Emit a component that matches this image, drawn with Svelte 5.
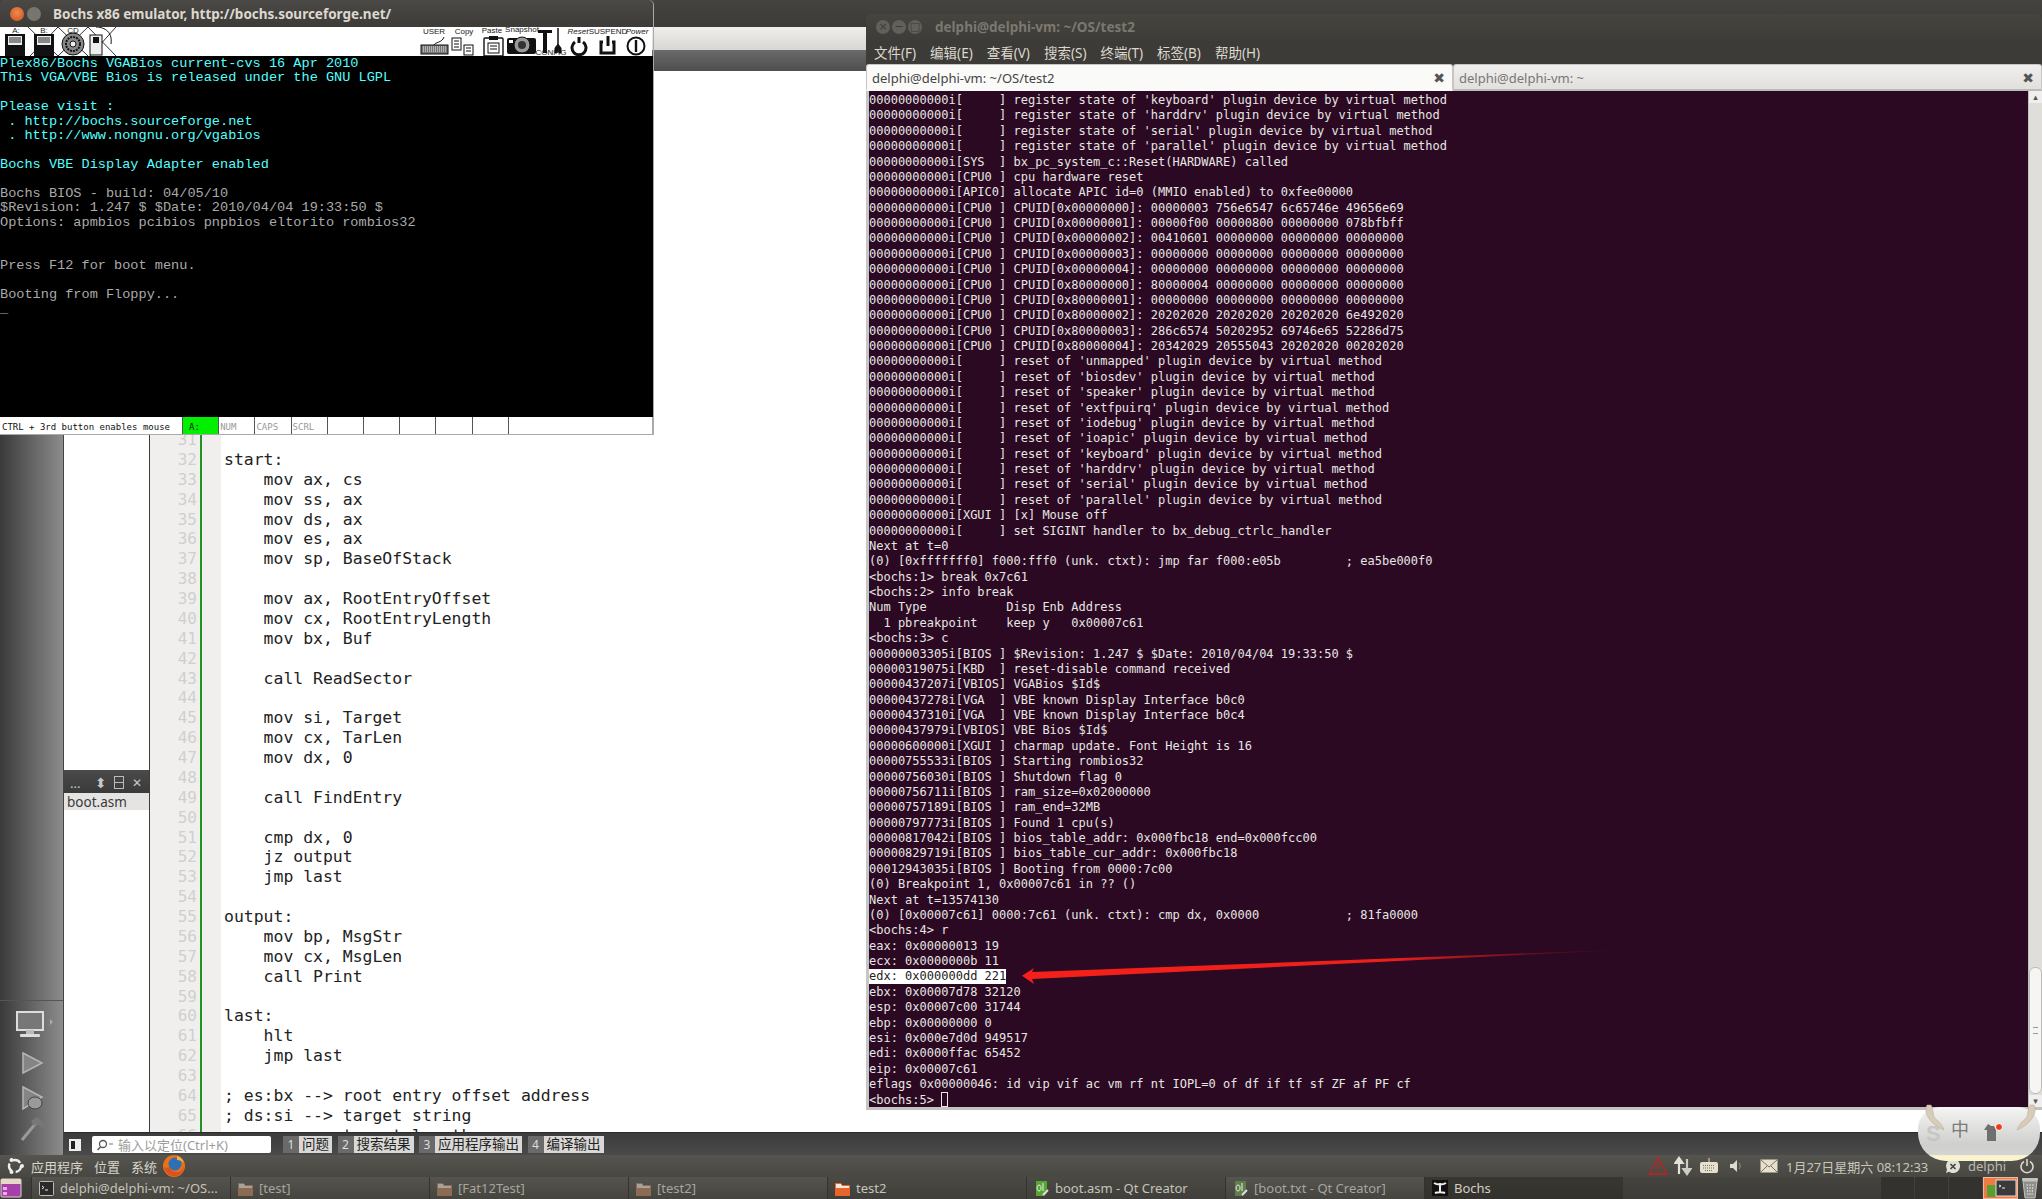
<script lang="ts">
  const bochsRows = [
    ['Plex86/Bochs VGABios current-cvs 16 Apr 2010', 'c'],
    ['This VGA/VBE Bios is released under the GNU LGPL', 'c'],
    ['', 'c'],
    ['Please visit :', 'c'],
    [' . http://bochs.sourceforge.net', 'c'],
    [' . http://www.nongnu.org/vgabios', 'c'],
    ['', 'c'],
    ['Bochs VBE Display Adapter enabled', 'c'],
    ['', 'g'],
    ['Bochs BIOS - build: 04/05/10', 'g'],
    ['$Revision: 1.247 $ $Date: 2010/04/04 19:33:50 $', 'g'],
    ['Options: apmbios pcibios pnpbios eltorito rombios32', 'g'],
    ['', 'g'],
    ['', 'g'],
    ['Press F12 for boot menu.', 'g'],
    ['', 'g'],
    ['Booting from Floppy...', 'g'],
    ['_', 'g']
  ];

  const code = [
    '', 'start:', '    mov ax, cs', '    mov ss, ax', '    mov ds, ax', '    mov es, ax',
    '    mov sp, BaseOfStack', '', '    mov ax, RootEntryOffset', '    mov cx, RootEntryLength',
    '    mov bx, Buf', '', '    call ReadSector', '', '    mov si, Target', '    mov cx, TarLen',
    '    mov dx, 0', '', '    call FindEntry', '', '    cmp dx, 0', '    jz output', '    jmp last', '',
    'output:', '    mov bp, MsgStr', '    mov cx, MsgLen', '    call Print', '', 'last:', '    hlt',
    '    jmp last', '', '; es:bx --> root entry offset address', '; ds:si --> target string',
    '; cx    --> target length'
  ];

  const term = [
    "00000000000i[     ] register state of 'keyboard' plugin device by virtual method",
    "00000000000i[     ] register state of 'harddrv' plugin device by virtual method",
    "00000000000i[     ] register state of 'serial' plugin device by virtual method",
    "00000000000i[     ] register state of 'parallel' plugin device by virtual method",
    '00000000000i[SYS  ] bx_pc_system_c::Reset(HARDWARE) called',
    '00000000000i[CPU0 ] cpu hardware reset',
    '00000000000i[APIC0] allocate APIC id=0 (MMIO enabled) to 0xfee00000',
    '00000000000i[CPU0 ] CPUID[0x00000000]: 00000003 756e6547 6c65746e 49656e69',
    '00000000000i[CPU0 ] CPUID[0x00000001]: 00000f00 00000800 00000000 078bfbff',
    '00000000000i[CPU0 ] CPUID[0x00000002]: 00410601 00000000 00000000 00000000',
    '00000000000i[CPU0 ] CPUID[0x00000003]: 00000000 00000000 00000000 00000000',
    '00000000000i[CPU0 ] CPUID[0x00000004]: 00000000 00000000 00000000 00000000',
    '00000000000i[CPU0 ] CPUID[0x80000000]: 80000004 00000000 00000000 00000000',
    '00000000000i[CPU0 ] CPUID[0x80000001]: 00000000 00000000 00000000 00000000',
    '00000000000i[CPU0 ] CPUID[0x80000002]: 20202020 20202020 20202020 6e492020',
    '00000000000i[CPU0 ] CPUID[0x80000003]: 286c6574 50202952 69746e65 52286d75',
    '00000000000i[CPU0 ] CPUID[0x80000004]: 20342029 20555043 20202020 00202020',
    "00000000000i[     ] reset of 'unmapped' plugin device by virtual method",
    "00000000000i[     ] reset of 'biosdev' plugin device by virtual method",
    "00000000000i[     ] reset of 'speaker' plugin device by virtual method",
    "00000000000i[     ] reset of 'extfpuirq' plugin device by virtual method",
    "00000000000i[     ] reset of 'iodebug' plugin device by virtual method",
    "00000000000i[     ] reset of 'ioapic' plugin device by virtual method",
    "00000000000i[     ] reset of 'keyboard' plugin device by virtual method",
    "00000000000i[     ] reset of 'harddrv' plugin device by virtual method",
    "00000000000i[     ] reset of 'serial' plugin device by virtual method",
    "00000000000i[     ] reset of 'parallel' plugin device by virtual method",
    '00000000000i[XGUI ] [x] Mouse off',
    '00000000000i[     ] set SIGINT handler to bx_debug_ctrlc_handler',
    'Next at t=0',
    '(0) [0xfffffff0] f000:fff0 (unk. ctxt): jmp far f000:e05b         ; ea5be000f0',
    '<bochs:1> break 0x7c61',
    '<bochs:2> info break',
    'Num Type           Disp Enb Address',
    '  1 pbreakpoint    keep y   0x00007c61',
    '<bochs:3> c',
    '00000003305i[BIOS ] $Revision: 1.247 $ $Date: 2010/04/04 19:33:50 $',
    '00000319075i[KBD  ] reset-disable command received',
    '00000437207i[VBIOS] VGABios $Id$',
    '00000437278i[VGA  ] VBE known Display Interface b0c0',
    '00000437310i[VGA  ] VBE known Display Interface b0c4',
    '00000437979i[VBIOS] VBE Bios $Id$',
    '00000600000i[XGUI ] charmap update. Font Height is 16',
    '00000755533i[BIOS ] Starting rombios32',
    '00000756030i[BIOS ] Shutdown flag 0',
    '00000756711i[BIOS ] ram_size=0x02000000',
    '00000757189i[BIOS ] ram_end=32MB',
    '00000797773i[BIOS ] Found 1 cpu(s)',
    '00000817042i[BIOS ] bios_table_addr: 0x000fbc18 end=0x000fcc00',
    '00000829719i[BIOS ] bios_table_cur_addr: 0x000fbc18',
    '00012943035i[BIOS ] Booting from 0000:7c00',
    '(0) Breakpoint 1, 0x00007c61 in ?? ()',
    'Next at t=13574130',
    '(0) [0x00007c61] 0000:7c61 (unk. ctxt): cmp dx, 0x0000            ; 81fa0000',
    '<bochs:4> r',
    'eax: 0x00000013 19',
    'ecx: 0x0000000b 11',
    'edx: 0x000000dd 221',
    'ebx: 0x00007d78 32120',
    'esp: 0x00007c00 31744',
    'ebp: 0x00000000 0',
    'esi: 0x000e7d0d 949517',
    'edi: 0x0000ffac 65452',
    'eip: 0x00007c61',
    'eflags 0x00000046: id vip vif ac vm rf nt IOPL=0 of df if tf sf ZF af PF cf',
    '<bochs:5> '
  ];

  const menus = ['文件(F)', '编辑(E)', '查看(V)', '搜索(S)', '终端(T)', '标签(B)', '帮助(H)'];
  const outTabs = [['1', '问题'], ['2', '搜索结果'], ['3', '应用程序输出'], ['4', '编译输出']];
  const statusCells = ['A:', 'NUM', 'CAPS', 'SCRL', '', '', '', '', '', ''];

  const tasks = [
    { t: 'delphi@delphi-vm: ~/OS...', k: 'term' },
    { t: '[test]', k: 'dim' },
    { t: '[Fat12Test]', k: 'dim' },
    { t: '[test2]', k: 'dim' },
    { t: 'test2', k: 'folder' },
    { t: 'boot.asm - Qt Creator', k: 'qt' },
    { t: '[boot.txt - Qt Creator]', k: 'qtdim' },
    { t: 'Bochs', k: 'bochs' }
  ];
</script>

<div class="desktop">
  <!-- Qt Creator, underneath everything -->
  <div class="qt">
    <div class="qt-title"></div>
    <div class="qt-menu"></div>
    <div class="qt-tool"></div>
    <div class="qt-body">
      <div class="side">
        <div class="side-fill"></div>
        <div class="side-icons">
          <svg width="46" height="32" viewBox="0 0 46 32">
            <rect x="7" y="3" width="26" height="18" fill="#777" stroke="#ddd" stroke-width="2"/>
            <rect x="16" y="21" width="8" height="4" fill="#bbb"/>
            <rect x="10" y="25" width="20" height="3" rx="1" fill="#ddd"/>
            <path d="M40 10l3 3-3 3z" fill="#aaa"/>
          </svg>
          <svg width="46" height="26" viewBox="0 0 46 26">
            <path d="M13 3l19 10-19 10z" fill="#858585" stroke="#b5b5b5" stroke-width="1.5"/>
          </svg>
          <svg width="46" height="28" viewBox="0 0 46 28">
            <path d="M13 2l19 10-19 12z" fill="#858585" stroke="#b5b5b5" stroke-width="1.5"/>
            <ellipse cx="25" cy="18" rx="7" ry="6" fill="#9a9a9a" stroke="#444"/>
          </svg>
          <svg class="hammer" width="46" height="26" viewBox="0 0 46 26">
            <path d="M12 24L26 7" stroke="#999" stroke-width="3"/>
            <path d="M21 5l6-4 8 7-3 3-6-3-2 2z" fill="#777"/>
          </svg>
        </div>
      </div>
      <div class="qt-work">
        <div class="qt-main">
          <div class="proj">
            <div class="proj-top"></div>
            <div class="proj-head">
              <span class="dots">...</span>
              <span class="sort">⬍</span>
              <span class="split"></span>
              <span class="x">✕</span>
            </div>
            <div class="proj-file">boot.asm</div>
          </div>
          <div class="editor">
            {#each code as line, i}
              <div class="cl">
                <span class="num">{i + 31}</span>
                <span class="bar"></span>
                <span class="fold"></span>
                <span class="src">{line}</span>
              </div>
            {/each}
          </div>
        </div>
        <div class="qt-bottom">
          <svg class="toggle" width="16" height="14" viewBox="0 0 16 14">
            <rect x="1" y="1" width="12" height="12" fill="#eee"/>
            <rect x="3" y="3" width="4" height="8" fill="#222"/>
          </svg>
          <div class="locate">
            <svg width="18" height="12" viewBox="0 0 18 12">
              <circle cx="7" cy="5" r="3.5" fill="none" stroke="#555" stroke-width="1.3"/>
              <path d="M4.5 8L1.5 11" stroke="#555" stroke-width="1.5"/>
              <path d="M13 5h4" stroke="#777"/>
            </svg>
            <span>输入以定位(Ctrl+K)</span>
          </div>
          {#each outTabs as [n, label]}
            <div class="otab"><span class="n">{n}</span><span class="l">{label}</span></div>
          {/each}
        </div>
      </div>
    </div>
  </div>

  <!-- panels -->
  <div class="panel-top">
    <svg class="ulogo" width="20" height="20" viewBox="0 0 20 20">
      <circle cx="10" cy="10" r="6" fill="none" stroke="#eee" stroke-width="2.4" stroke-dasharray="8.5 4"/>
      <circle cx="17" cy="10" r="2" fill="#eee"/>
      <circle cx="6.5" cy="4" r="2" fill="#eee"/>
      <circle cx="6.5" cy="16" r="2" fill="#eee"/>
    </svg>
    <span class="pm">应用程序</span>
    <span class="pm">位置</span>
    <span class="pm">系统</span>
    <svg class="fox" width="24" height="24" viewBox="0 0 24 24">
      <circle cx="12" cy="12" r="11" fill="#e8711a"/>
      <circle cx="13" cy="10" r="6.5" fill="#2f6fb3"/>
      <path d="M2 13c1 6 6 10 12 9 5-1 8-5 8-10-1 4-4 7-8 6-4 0-6-3-6-5-3 1-5 1-6 0z" fill="#d9531e"/>
      <path d="M15 2c4 1 6 4 7 7-2-2-4-3-7-3z" fill="#f6b23a"/>
    </svg>
    <div class="tray">
      <svg width="22" height="20" viewBox="0 0 22 20"><path d="M11 2l9 16H2z" fill="none" stroke="#c4201e" stroke-width="1.3"/><path d="M11 7v6M11 14.5v1.5" stroke="#c4201e" stroke-width="1.3"/></svg>
      <svg class="t-net" width="18" height="20" viewBox="0 0 18 20"><path d="M5 18V5M1.5 7L5 2l3.5 5z" stroke="#e4e1d8" stroke-width="2.2" fill="#e4e1d8"/><path d="M13 3v13M9.5 13l3.5 5 3.5-5z" stroke="#cfcbc0" stroke-width="2.2" fill="#cfcbc0"/></svg>
      <svg class="t-key" width="20" height="16" viewBox="0 0 20 16"><rect x="1" y="4" width="18" height="11" rx="2" fill="#e6e0cc"/><path d="M10 4V0" stroke="#e6e0cc"/><path d="M4 7.5h12M4 10h12M6 12.5h8" stroke="#77756b" stroke-dasharray="1 1"/></svg>
      <svg class="t-vol" width="14" height="14" viewBox="0 0 14 14"><path d="M1 5h3l4-4v12l-4-4H1z" fill="#dedbd0"/><path d="M10 4c1.5 2 1.5 4 0 6" stroke="#99978e" fill="none"/></svg>
      <svg class="t-mail" width="18" height="14" viewBox="0 0 18 14"><rect x="0.5" y="0.5" width="17" height="13" fill="#e6e0cc"/><path d="M1 1l8 7 8-7M1 13l6-6M17 13l-6-6" stroke="#77756b" fill="none"/></svg>
      <span class="clock">1月27日星期六 08:12:33</span>
      <svg class="t-user" width="18" height="18" viewBox="0 0 18 18"><path d="M9 2a7 7 0 1 1-4 12.7L2 16l1-3.5A7 7 0 0 1 9 2z" fill="#e2dfd4"/><path d="M6.5 7l5 5M11.5 7l-5 5" stroke="#444" stroke-width="1.6"/></svg>
      <span class="who">delphi</span>
      <svg class="t-pow" width="16" height="16" viewBox="0 0 16 16"><path d="M5 3.5a6 6 0 1 0 6 0" fill="none" stroke="#dcd9cf" stroke-width="1.6"/><path d="M8 1v7" stroke="#dcd9cf" stroke-width="1.6"/></svg>
    </div>
  </div>
  <div class="panel-tasks">
    <svg class="showdesk" width="22" height="20" viewBox="0 0 22 20">
      <rect x="1" y="1" width="20" height="18" rx="1" fill="#a63fa8" stroke="#d8d4c8"/>
      <rect x="1" y="1" width="20" height="5" fill="#e6d8c8"/>
      <rect x="3" y="9" width="4" height="3" fill="#f2a8ee"/>
      <rect x="3" y="14" width="4" height="3" fill="#f2a8ee"/>
    </svg>
    <div class="tasks">
      {#each tasks as task}
        <div class="task k-{task.k}">
          {#if task.k === 'term'}
            <svg width="15" height="15" viewBox="0 0 15 15"><rect x="0.5" y="0.5" width="14" height="14" rx="1" fill="#2a2a2a" stroke="#bbb"/><path d="M3 5l2 1.5L3 8M6 9h3" stroke="#eee" fill="none"/></svg>
          {:else if task.k === 'dim' || task.k === 'folder'}
            <svg width="15" height="15" viewBox="0 0 15 15">
              <path d="M0 2h6l1 2h8v11H0z" fill={task.k === 'dim' ? '#8d6a54' : '#e7642a'}/>
              <path d="M1 3h5l1 2h7v2H1z" fill={task.k === 'dim' ? '#a8a29a' : '#f2e8e0'}/>
            </svg>
          {:else if task.k === 'qt' || task.k === 'qtdim'}
            <svg width="15" height="17" viewBox="0 0 15 17">
              <path d="M2 1h11v12l-3 3H2z" fill={task.k === 'qt' ? '#55a632' : '#5d7f4a'}/>
              <path d="M5 5a2 3 0 1 0 .1 0M9 3v8" stroke="#eee" fill="none"/>
              <path d="M9 15l5-5" stroke="#ddd" stroke-width="2"/>
            </svg>
          {:else}
            <svg width="16" height="16" viewBox="0 0 16 16">
              <rect width="16" height="16" fill="#111"/>
              <path d="M2 3c3 2 9 2 12 0M8 3v10M3 13c2-1 8-1 10 0" stroke="#eee" stroke-width="2" fill="none"/>
            </svg>
          {/if}
          <span>{task.t}</span>
        </div>
      {/each}
    </div>
    <div class="pager">
      <span class="ws"></span><span class="ws"></span><span class="ws"></span>
      <span class="ws on"><i class="wsg"></i><svg width="22" height="18" viewBox="0 0 22 18"><rect x="1" y="1" width="20" height="16" fill="#3a3a3a" stroke="#ddd"/><path d="M4 6l2 1-2 1M7 9h3" stroke="#eee" fill="none"/></svg></span>
    </div>
    <svg class="trash" width="20" height="22" viewBox="0 0 20 22">
      <path d="M3 4h14l-2 17H5z" fill="#8f8f8a" stroke="#c4c4bf"/>
      <rect x="2" y="1" width="16" height="3" rx="1" fill="#c4c4bf"/>
      <path d="M7 7l1 12M10 7v12M13 7l-1 12" stroke="#d8d8d4" stroke-dasharray="2 1"/>
    </svg>
  </div>

  <!-- Bochs window -->
  <div class="bochs">
    <div class="b-title">
      <span class="btn close"></span>
      <span class="btn mini"></span>
      <span class="b-name">Bochs x86 emulator, http://bochs.sourceforge.net/</span>
    </div>
    <svg class="b-tools" width="652" height="29" viewBox="0 0 652 29">
      <g class="lbl">
        <text x="16" y="6">A:</text>
        <text x="44" y="6">B:</text>
        <text x="73" y="6">CD</text>
        <text x="434" y="7" font-size="9">USER</text>
        <text x="464" y="7" font-size="9">Copy</text>
        <text x="492" y="6" font-size="8">Paste</text>
        <text x="522" y="5" font-size="7.5">Snapshot</text>
        <text x="551" y="28" font-size="6">CONFIG</text>
        <text x="578" y="7" font-size="8" font-style="italic">Reset</text>
        <text x="608" y="7" font-size="6.5">SUSPEND</text>
        <text x="637" y="7" font-size="8" font-style="italic">Power</text>
      </g>
      <g stroke="#000" stroke-width="0.8">
        <path d="M28 0l30 29M58 0L30 29M58 0l30 29M88 0L58 29M88 0l28 29M116 0L90 29" fill="none"/>
      </g>
      <rect x="5" y="7" width="20" height="22" fill="#111"/>
      <rect x="8" y="9" width="14" height="9" fill="#eee"/>
      <path d="M9 11h12M9 13h12M9 15h12" stroke="#222"/>
      <rect x="34" y="7" width="20" height="22" fill="#111"/>
      <rect x="37" y="9" width="14" height="9" fill="#eee"/>
      <path d="M38 11h12M38 13h12M38 15h12" stroke="#222"/>
      <circle cx="73" cy="17" r="11" fill="#888" stroke="#111"/>
      <circle cx="73" cy="17" r="7" fill="none" stroke="#111" stroke-dasharray="2 1" stroke-width="2"/>
      <circle cx="73" cy="17" r="3" fill="#eee" stroke="#111"/>
      <rect x="90" y="8" width="12" height="20" fill="#eee" stroke="#111"/>
      <rect x="93" y="10" width="6" height="6" fill="#111"/>
      <path d="M96 0c6 0 17 3 15 17" fill="none" stroke="#111"/>
      <rect x="421" y="18" width="27" height="9" fill="#777" stroke="#111"/>
      <path d="M423 20h23M423 22h23M423 24h23" stroke="#eee" stroke-dasharray="1 1"/>
      <path d="M434 18c1-3 8-2 10-8" fill="none" stroke="#111"/>
      <rect x="452" y="11" width="9" height="12" fill="#fff" stroke="#111"/>
      <path d="M454 14h5M454 17h5M454 20h5" stroke="#111"/>
      <rect x="464" y="18" width="9" height="10" fill="#fff" stroke="#111"/>
      <path d="M466 21h5M466 24h5" stroke="#111"/>
      <rect x="484" y="11" width="19" height="18" rx="1" fill="#fff" stroke="#111" stroke-width="1.4"/>
      <rect x="489" y="9" width="9" height="4" fill="#111"/>
      <rect x="488" y="16" width="11" height="10" fill="#fff" stroke="#111"/>
      <path d="M490 19h7M490 22h7" stroke="#111"/>
      <rect x="507" y="11" width="29" height="16" rx="2" fill="#111"/>
      <circle cx="522" cy="18" r="8" fill="#999" stroke="#111"/>
      <circle cx="522" cy="18" r="4" fill="#333"/>
      <rect x="509" y="13" width="4" height="3" fill="#fff"/>
      <path d="M538 3h14v3h-5v20h-4V6h-5z" fill="#111"/>
      <path d="M558 1v16l-3 4v5h2l1-4 1 4h2v-5l-3-4z" fill="#111" stroke="#111"/>
      <path d="M575 15a7 7 0 1 0 8 0M579 10v6" fill="none" stroke="#111" stroke-width="3"/>
      <path d="M603 15h-2v11h13V15h-2M608 9v10" fill="none" stroke="#111" stroke-width="3"/>
      <circle cx="636" cy="19" r="8.5" fill="#fff" stroke="#111" stroke-width="2"/>
      <path d="M636 13v12" stroke="#111" stroke-width="2.4"/>
    </svg>
    <div class="b-screen">
      {#each bochsRows as [text, tone]}
        <div class="b-row {tone}">{text}</div>
      {/each}
    </div>
    <div class="b-status">
      <div class="b-hint">CTRL + 3rd button enables mouse</div>
      {#each statusCells as cell, i}
        <div class="b-cell" class:on={i === 0}>{cell}</div>
      {/each}
    </div>
  </div>

  <!-- terminal window -->
  <div class="term">
    <div class="t-title">
      <span class="wb">×</span><span class="wb">−</span><span class="wb sq">□</span>
      <span class="t-name">delphi@delphi-vm: ~/OS/test2</span>
    </div>
    <div class="t-menu">
      {#each menus as m}<span>{m}</span>{/each}
    </div>
    <div class="t-tabs">
      <div class="t-tab active"><span>delphi@delphi-vm: ~/OS/test2</span><b>✖</b></div>
      <div class="t-tab"><span>delphi@delphi-vm: ~</span><b>✖</b></div>
    </div>
    <div class="t-body">
      <div class="t-text">
        {#each term as line, i}
          <div class="t-line">
            {#if i === 57}
              <span class="sel">{line}</span>
            {:else}
              {line}{#if i === 65}<span class="cursor"></span>{/if}
            {/if}
          </div>
        {/each}
      </div>
      <div class="scroll">
        <span class="arrow">▴</span>
        <div class="track"><div class="thumb"><i></i></div></div>
        <span class="arrow">▾</span>
      </div>
    </div>
  </div>

  <svg class="annot" width="640" height="50" viewBox="0 0 640 50">
    <defs>
      <linearGradient id="fade" x1="0" x2="1" y1="0" y2="0">
        <stop offset="0" stop-color="#f5201a"/>
        <stop offset="0.6" stop-color="#ee1f1a"/>
        <stop offset="1" stop-color="#8a1520" stop-opacity="0"/>
      </linearGradient>
    </defs>
    <path d="M2 35.7L14 28l-2 4L620 9 12 39l2 5z" fill="url(#fade)"/>
  </svg>

  <!-- Sogou IME status pad -->
  <div class="sogou">
    <svg class="ear" width="134" height="36" viewBox="0 0 134 36">
      <path d="M13 2c-4 8 3 19 17 25-3-8-7-9-10-13-1-4-1-9-3-12z" fill="#d8cbb8" stroke="#b5a690" stroke-width="0.5"/>
      <path d="M120 2c4 8-3 19-17 25 3-8 7-9 10-13 1-4 1-9 3-12z" fill="#d8cbb8" stroke="#b5a690" stroke-width="0.5"/>
    </svg>
    <span class="s-logo">S</span>
    <span class="s-zh">中</span>
    <svg class="s-shirt" width="22" height="22" viewBox="0 0 22 22">
      <path d="M1 9l4-6 3 2h3l2 4v11H4V9z" fill="#6f6f6f"/>
      <circle cx="16" cy="6" r="3.5" fill="#f03a1c" stroke="#fff"/>
    </svg>
  </div>
</div>

<style>
  :global(body) {
    margin: 0;
    background: #3c3b37;
  }
  .desktop {
    position: relative;
    display: flex;
    flex-direction: column;
    width: 2042px;
    height: 1199px;
    overflow: hidden;
    font-family: 'Noto Sans', 'Noto Sans CJK SC', sans-serif;
  }

  /* Qt Creator */
  .qt {
    display: flex;
    flex-direction: column;
    height: 1155px;
    flex: none;
  }
  .qt-title {
    height: 27px;
    background: linear-gradient(#444340, #3c3b37);
  }
  .qt-menu {
    height: 23px;
    background: linear-gradient(#f0efed, #d8d6d2);
  }
  .qt-tool {
    height: 21px;
    background: linear-gradient(#6a6a6a, #4e4e4e);
  }
  .qt-body {
    flex: 1;
    min-height: 0;
    display: flex;
  }
  .side {
    width: 63px;
    flex: none;
    display: flex;
    flex-direction: column;
    background: linear-gradient(90deg, #3a3a3a, #8c8c8c);
    border-right: 1px solid #444;
  }
  .side-fill {
    height: 929px;
    flex: none;
    border-bottom: 1px solid #555;
  }
  .side-icons {
    display: flex;
    flex-direction: column;
    align-items: center;
    gap: 9px;
    padding-top: 8px;
    margin-left: 3px;
  }
  .hammer {
    margin-top: -6px;
  }
  .qt-work {
    flex: 1;
    min-width: 0;
    display: flex;
    flex-direction: column;
  }
  .qt-main {
    flex: 1;
    min-height: 0;
    display: flex;
  }
  .proj {
    width: 85px;
    flex: none;
    display: flex;
    flex-direction: column;
    background: #fff;
    border-right: 1px solid #3d3d3d;
  }
  .proj-top {
    height: 699px;
  }
  .proj-head {
    height: 23px;
    display: flex;
    align-items: center;
    background: linear-gradient(#4a4a4a, #3a3a3a);
    color: #c8c8c8;
    font-size: 13px;
    padding: 2px 0 0 6px;
    box-sizing: border-box;
  }
  .dots {
    width: 25px;
    line-height: 14px;
  }
  .sort {
    width: 17px;
    font-size: 14px;
    font-family: 'DejaVu Sans', sans-serif;
  }
  .split {
    width: 8px;
    height: 11px;
    border: 1px solid #bbb;
    background: linear-gradient(transparent 45%, #bbb 45%, #bbb 55%, transparent 55%);
    margin-right: 8px;
    margin-left: 2px;
  }
  .x {
    font-size: 12px;
    font-family: 'DejaVu Sans', sans-serif;
  }
  .proj-file {
    height: 17px;
    line-height: 18px;
    padding-left: 3px;
    background: #e6e4e2;
    color: #3a3a3a;
    font-size: 13.5px;
  }
  .editor {
    flex: 1;
    min-width: 0;
    padding-top: 359px;
    overflow: hidden;
    background: #fff;
    font-family: 'DejaVu Sans Mono', monospace;
    font-size: 16.45px;
    color: #222;
  }
  .cl {
    display: flex;
    height: 19.88px;
    line-height: 19.88px;
  }
  .num {
    width: 47px;
    padding-right: 3px;
    background: #f0efee;
    color: #cfcfcf;
    text-align: right;
    font-size: 16px;
  }
  .bar {
    width: 2px;
    background: #1f951f;
  }
  .fold {
    width: 19px;
    background: #f0efed;
  }
  .src {
    padding-left: 3px;
    white-space: pre;
  }
  .qt-bottom {
    height: 23px;
    flex: none;
    display: flex;
    align-items: center;
    background: linear-gradient(#3c3c3c, #4a4a4a);
    border-top: 1px solid #2c2c2c;
    box-sizing: border-box;
    padding: 1px 0 0 4px;
  }
  .toggle {
    width: 16px;
    margin-right: 8px;
  }
  .locate {
    width: 175px;
    height: 17px;
    display: flex;
    align-items: center;
    gap: 4px;
    padding-left: 4px;
    margin-right: 12px;
    background: #fff;
    border-radius: 2px;
    color: #9c9c9c;
    font-size: 13px;
  }
  .otab {
    height: 17px;
    display: flex;
    margin-right: 5.5px;
    font-size: 13.5px;
    line-height: 17px;
  }
  .n {
    width: 16px;
    text-align: center;
    background: #6a6a6a;
    color: #ddd;
    font-size: 12px;
  }
  .l {
    padding: 0 3px;
    background: #d9d8d6;
    color: #222;
  }

  /* panels */
  .panel-top {
    height: 22px;
    flex: none;
    display: flex;
    align-items: center;
    background: linear-gradient(#55544e, #484742);
    color: #d8d5cc;
    font-size: 13px;
  }
  .ulogo {
    margin: 0 6px 0 5px;
  }
  .pm {
    margin-right: 11px;
  }
  .fox {
    margin-left: -6px;
  }
  .tray {
    margin-left: auto;
    display: flex;
    align-items: center;
  }
  .t-net {
    margin-left: 5px;
  }
  .t-key {
    margin-left: 7px;
  }
  .t-vol {
    margin-left: 10px;
  }
  .t-mail {
    margin-left: 17px;
  }
  .clock {
    margin-left: 8px;
    width: 145px;
    white-space: nowrap;
    color: #c8c6bd;
  }
  .t-user {
    margin-left: 13px;
  }
  .who {
    margin-left: 6px;
    width: 42px;
    color: #bdbab0;
  }
  .t-pow {
    margin: 0 7px 0 9px;
  }
  .panel-tasks {
    height: 22px;
    flex: none;
    display: flex;
    align-items: center;
    background: linear-gradient(#45443f, #3c3b37);
    color: #c6c3ba;
    font-size: 13px;
  }
  .showdesk {
    flex: none;
    margin-right: 9px;
  }
  .tasks {
    display: flex;
    height: 100%;
  }
  .task {
    width: 199px;
    box-sizing: border-box;
    display: flex;
    align-items: center;
    gap: 6px;
    padding-left: 7px;
    border-left: 1px solid #33322e;
    background: linear-gradient(#55544f, #45443f);
    white-space: nowrap;
  }
  .k-dim,
  .k-qtdim {
    color: #a8a59d;
  }
  .k-folder,
  .k-qt {
    background: linear-gradient(#4a4944, #3f3e3a);
  }
  .k-bochs {
    background: linear-gradient(#38372f, #32312d);
    color: #d2cfc6;
  }
  .pager {
    margin-left: auto;
    display: flex;
    height: 100%;
    align-items: center;
  }
  .ws {
    width: 33px;
    height: 100%;
    margin-left: 1px;
    background: #33322e;
  }
  .ws.on {
    width: 35px;
    display: flex;
    align-items: center;
    justify-content: flex-end;
    background: #ef7a45;
    box-sizing: border-box;
    border: 1px solid #f3b89a;
    position: relative;
  }
  .wsg {
    position: absolute;
    left: 3px;
    top: 7px;
    width: 9px;
    height: 12px;
    background: #5a9e30;
  }
  .ws.on svg {
    position: relative;
  }
  .trash {
    margin: 0 2px 0 2px;
    flex: none;
  }

  /* Bochs */
  .bochs {
    position: absolute;
    left: 0;
    top: 0;
    width: 653px;
    display: flex;
    flex-direction: column;
    border-radius: 5px 5px 0 0;
    overflow: hidden;
    box-shadow: 1px 0 0 #aaa;
  }
  .b-title {
    height: 27px;
    flex: none;
    display: flex;
    align-items: center;
    background: linear-gradient(#4a4945, #3c3b37);
  }
  .btn {
    width: 14px;
    height: 14px;
    border-radius: 50%;
    margin-left: 3px;
  }
  .close {
    margin-left: 10px;
    background: radial-gradient(circle at 50% 40%, #f08a50, #c8501e);
  }
  .mini {
    background: #77756e;
  }
  .b-name {
    margin-left: 12px;
    color: #dcd8cf;
    font-size: 13.5px;
    font-weight: 700;
    white-space: nowrap;
  }
  .b-tools {
    display: block;
    flex: none;
    background: #fff;
  }
  .lbl text {
    text-anchor: middle;
    font-family: 'Liberation Sans', sans-serif;
    font-size: 8px;
    fill: #222;
  }
  .b-screen {
    height: 361px;
    flex: none;
    box-sizing: border-box;
    padding-top: 1px;
    background: #000;
    font-family: 'Liberation Mono', monospace;
    font-size: 13.58px;
    line-height: 14.44px;
    white-space: pre;
  }
  .b-row {
    height: 14.44px;
  }
  .c {
    color: #54ffff;
  }
  .g {
    color: #aaa;
  }
  .b-status {
    height: 18px;
    flex: none;
    box-sizing: border-box;
    display: grid;
    grid-template-columns: 182px repeat(10, 36.2px) 1fr;
    background: #fff;
    border-bottom: 1px solid #aaa;
    border-right: 1px solid #aaa;
    font-family: 'DejaVu Sans Mono', monospace;
    font-size: 9px;
    line-height: 21px;
  }
  .b-hint {
    padding-left: 2px;
    color: #111;
    white-space: nowrap;
  }
  .b-cell {
    border-left: 1px solid #555;
    padding-left: 1px;
    color: #999;
    height: 17px;
  }
  .b-cell.on {
    background: #00f000;
    color: #111;
    padding-left: 6px;
  }

  /* terminal */
  .term {
    position: absolute;
    left: 866px;
    top: 14px;
    width: 1176px;
    height: 1096px;
    display: flex;
    flex-direction: column;
    border-radius: 5px 5px 0 0;
    overflow: hidden;
    background: #3c3b37;
  }
  .t-title {
    height: 27px;
    flex: none;
    display: flex;
    align-items: center;
    padding: 0 0 2px 10px;
    box-sizing: border-box;
    background: linear-gradient(#45443f, #3d3c38);
    color: #7b7870;
    font-size: 13.5px;
  }
  .wb {
    width: 14px;
    height: 14px;
    margin-right: 2px;
    border-radius: 50%;
    background: #62605a;
    color: #3c3b37;
    text-align: center;
    font: 11px/14px 'DejaVu Sans', sans-serif;
  }
  .t-name {
    margin-left: 11px;
    font-weight: 700;
  }
  .t-menu {
    height: 23px;
    flex: none;
    display: flex;
    align-items: center;
    padding: 0 0 2px 8px;
    box-sizing: border-box;
    gap: 14px;
    color: #dcd8ce;
    font-size: 13.5px;
  }
  .t-tabs {
    height: 27px;
    flex: none;
    display: flex;
    font-size: 13px;
  }
  .t-tab {
    flex: 1;
    display: flex;
    align-items: center;
    justify-content: space-between;
    padding: 1px 7px 0 5px;
    background: linear-gradient(#f0efed, #e2e0dd);
    border: 1px solid #c8c6c2;
    border-bottom: 2px solid #bbb;
    border-radius: 3px 3px 0 0;
    box-sizing: border-box;
    color: #777;
  }
  .t-tab.active {
    flex: none;
    width: 587px;
    background: #fafaf9;
    border-bottom-color: #fafaf9;
    color: #444;
  }
  .t-tab b {
    font: 14px 'DejaVu Sans', sans-serif;
    color: #555;
  }
  .t-body {
    flex: 1;
    min-height: 0;
    display: flex;
    background: #2c0922;
    border-left: 3px solid #c8c6c2;
    border-bottom: 3px solid #c4c2be;
  }
  .t-text {
    flex: 1;
    min-width: 0;
    padding-top: 2px;
    font-family: 'DejaVu Sans Mono', monospace;
    font-size: 12px;
    color: #e6e6e2;
  }
  .t-line {
    height: 15.38px;
    line-height: 15.38px;
    white-space: pre;
  }
  .sel {
    display: inline-block;
    width: 137px;
    height: 15px;
    background: #fff;
    color: #222;
  }
  .cursor {
    display: inline-block;
    width: 7px;
    height: 15px;
    margin-bottom: -3px;
    box-sizing: border-box;
    border: 1px solid #e6e6e2;
  }
  .scroll {
    width: 13px;
    flex: none;
    display: flex;
    flex-direction: column;
    background: #e0dedb;
    border-left: 1px solid #c4c2be;
  }
  .arrow {
    height: 12px;
    text-align: center;
    font: 9px/12px 'DejaVu Sans', sans-serif;
    color: #555;
    background: #f0efed;
  }
  .track {
    flex: 1;
    padding-top: 864px;
  }
  .thumb {
    height: 127px;
    border: 1px solid #bbb;
    border-radius: 6px;
    box-sizing: border-box;
    background: #f6f5f3;
    display: flex;
    align-items: center;
    justify-content: center;
  }
  .thumb i {
    width: 5px;
    height: 5px;
    border-top: 1px solid #999;
    border-bottom: 1px solid #999;
  }

  .annot {
    position: absolute;
    left: 1020px;
    top: 940px;
  }

  /* Sogou pad */
  .sogou {
    position: absolute;
    left: 1918px;
    top: 1107px;
    width: 122px;
    height: 54px;
    box-sizing: border-box;
    display: flex;
    align-items: center;
    border-radius: 22px 22px 28px 28px;
    background: linear-gradient(#f4f4f3, #cfcfce 70%, #d4d4d2 88%, #faf3cd 90%);
  }
  .ear {
    position: absolute;
    left: -4px;
    top: -4px;
  }
  .s-logo {
    position: absolute;
    left: 8px;
    top: 14px;
    color: #c6c6c6;
    font: 700 22px 'Liberation Sans', sans-serif;
  }
  .s-zh {
    position: absolute;
    left: 33px;
    top: 8px;
    color: #7a7a7a;
    font-size: 18px;
  }
  .s-shirt {
    position: absolute;
    left: 65px;
    top: 14px;
  }
</style>
